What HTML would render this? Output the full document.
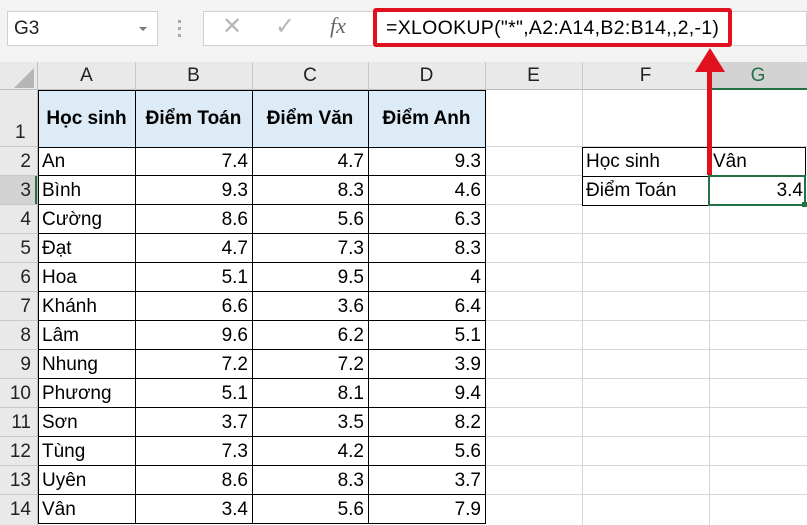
<!DOCTYPE html>
<html><head><meta charset="utf-8"><style>
body{margin:0;width:807px;height:525px;overflow:hidden;background:#fff;font-family:"Liberation Sans",sans-serif;position:relative}
.a{position:absolute;box-sizing:border-box}
.t{font-size:19px;color:#000;line-height:29px;white-space:nowrap}
.ch{font-size:19px;color:#222;text-align:center;line-height:28px}
.rh{font-size:19px;color:#222;text-align:right;padding-right:6px;background:#e9e9e9}
.gv{background:#d6d6d6;width:1px}
.gh{background:#d6d6d6;height:1px}
</style></head><body>
<div class="a" style="left:0;top:0;width:807px;height:62px;background:#f3f3f3"></div>
<div class="a" style="left:7px;top:11px;width:151px;height:35px;background:#fff;border:1px solid #d0d0d0"></div>
<div class="a t" style="left:14px;top:14px;font-size:19px;color:#222">G3</div>
<div class="a" style="left:139px;top:27px;width:0;height:0;border-left:4px solid transparent;border-right:4px solid transparent;border-top:4px solid #777"></div>
<div class="a" style="left:178px;top:20px;width:3px;height:3px;background:#aaa"></div>
<div class="a" style="left:178px;top:27px;width:3px;height:3px;background:#aaa"></div>
<div class="a" style="left:178px;top:34px;width:3px;height:3px;background:#aaa"></div>
<div class="a" style="left:203px;top:11px;width:604px;height:35px;background:#fff;border:1px solid #d0d0d0"></div>
<div class="a" style="left:222px;top:12px;font-size:24px;color:#b8b8b8">✕</div>
<div class="a" style="left:275px;top:12px;font-size:24px;color:#b8b8b8">✓</div>
<div class="a" style="left:330px;top:13px;font-size:22px;font-style:italic;font-family:'Liberation Serif',serif;color:#666">fx</div>
<div class="a" style="left:373px;top:8px;width:359px;height:39px;border:4px solid #e0101e;border-radius:3px"></div>
<div class="a t" style="left:386px;top:14px;font-size:19.5px;letter-spacing:0.3px">=XLOOKUP("*",A2:A14,B2:B14,,2,-1)</div>
<div class="a" style="left:0;top:62px;width:807px;height:28px;background:#e9e9e9;border-bottom:1px solid #bdbdbd"></div>
<div class="a" style="left:709px;top:62px;width:98px;height:28px;background:#d3d3d3;border-bottom:2px solid #217346"></div>
<div class="a" style="left:14px;top:68px;width:0;height:0;border-left:20px solid transparent;border-bottom:20px solid #b5b5b5"></div>
<div class="a ch" style="left:38px;top:62px;width:97px">A</div>
<div class="a ch" style="left:135px;top:62px;width:117px">B</div>
<div class="a ch" style="left:252px;top:62px;width:116px">C</div>
<div class="a ch" style="left:368px;top:62px;width:117px">D</div>
<div class="a ch" style="left:485px;top:62px;width:97px">E</div>
<div class="a ch" style="left:582px;top:62px;width:127px">F</div>
<div class="a ch" style="left:709px;top:62px;width:98px;color:#217346">G</div>
<div class="a gv" style="left:37px;top:62px;height:463px;background:#bdbdbd"></div>
<div class="a gv" style="left:135px;top:62px;height:28px;background:#c8c8c8"></div>
<div class="a gv" style="left:252px;top:62px;height:28px;background:#c8c8c8"></div>
<div class="a gv" style="left:368px;top:62px;height:28px;background:#c8c8c8"></div>
<div class="a gv" style="left:485px;top:62px;height:28px;background:#c8c8c8"></div>
<div class="a gv" style="left:582px;top:62px;height:28px;background:#c8c8c8"></div>
<div class="a gv" style="left:709px;top:62px;height:28px;background:#c8c8c8"></div>
<div class="a" style="left:0;top:90px;width:37px;height:435px;background:#e9e9e9"></div>
<div class="a" style="left:0;top:176px;width:37px;height:29px;background:#d3d3d3;border-right:2px solid #217346"></div>
<div id="rows"></div>
<div class="a gv" style="left:582px;top:90px;height:435px"></div>
<div class="a gv" style="left:709px;top:90px;height:435px"></div>
<div class="a" style="left:38px;top:90px;width:448px;height:58px;background:#ddebf7;border:1px solid #000"></div>
<div class="a" style="left:135px;top:90px;width:1px;height:434px;background:#000"></div>
<div class="a" style="left:252px;top:90px;width:1px;height:434px;background:#000"></div>
<div class="a" style="left:368px;top:90px;width:1px;height:434px;background:#000"></div>
<div class="a" style="left:485px;top:90px;width:1px;height:434px;background:#000"></div>
<div class="a" style="left:38px;top:90px;width:1px;height:434px;background:#000"></div>
<div class="a t" style="left:38px;top:104px;width:97px;text-align:center;font-weight:bold;font-size:19px">Học sinh</div>
<div class="a t" style="left:135px;top:104px;width:117px;text-align:center;font-weight:bold;font-size:19px">Điểm Toán</div>
<div class="a t" style="left:252px;top:104px;width:116px;text-align:center;font-weight:bold;font-size:19px">Điểm Văn</div>
<div class="a t" style="left:368px;top:104px;width:117px;text-align:center;font-weight:bold;font-size:19px">Điểm Anh</div>
<div class="a" style="left:15px;top:118px;font-size:19px;line-height:29px;color:#222">1</div>
<script>
var d=[["An",7.4,4.7,9.3],["Bình",9.3,8.3,4.6],["Cường",8.6,5.6,6.3],["Đạt",4.7,7.3,8.3],["Hoa",5.1,9.5,4],["Khánh",6.6,3.6,6.4],["Lâm",9.6,6.2,5.1],["Nhung",7.2,7.2,3.9],["Phương",5.1,8.1,9.4],["Sơn",3.7,3.5,8.2],["Tùng",7.3,4.2,5.6],["Uyên",8.6,8.3,3.7],["Vân",3.4,5.6,7.9]];
var h="";
for(var i=0;i<13;i++){var y=147+i*29;
h+='<div class="a gh" style="left:0;top:'+(y-1)+'px;width:37px;background:#c8c8c8"></div>';
h+='<div class="a gh" style="left:486px;top:'+(y-1)+'px;width:321px"></div>';
h+='<div class="a" style="left:38px;top:'+(y-1)+'px;width:448px;height:1px;background:#000"></div>';
h+='<div class="a rh" style="left:0;top:'+y+'px;width:37px;height:28px;line-height:29px;background:transparent">'+(i+2)+'</div>';
h+='<div class="a t" style="left:42px;top:'+y+'px">'+d[i][0]+'</div>';
var xs=[[135,252],[252,368],[368,485]];
for(var j=0;j<3;j++)h+='<div class="a t" style="left:'+xs[j][0]+'px;top:'+y+'px;width:'+(xs[j][1]-xs[j][0]-4)+'px;text-align:right">'+d[i][j+1]+'</div>';
}
h+='<div class="a" style="left:38px;top:523px;width:448px;height:1px;background:#000"></div>';
document.getElementById("rows").innerHTML=h;
</script>
<div class="a" style="left:582px;top:147px;width:224px;height:59px;border:1px solid #000;background:#fff"></div>
<div class="a" style="left:582px;top:176px;width:224px;height:1px;background:#000"></div>
<div class="a" style="left:709px;top:147px;width:1px;height:59px;background:#000"></div>
<div class="a t" style="left:586px;top:147px">Học sinh</div>
<div class="a t" style="left:713px;top:147px">Vân</div>
<div class="a t" style="left:586px;top:176px">Điểm Toán</div>
<div class="a" style="left:708px;top:175px;width:98px;height:31px;border:2px solid #217346"></div>
<div class="a" style="left:802px;top:202px;width:5px;height:5px;background:#217346"></div>
<div class="a t" style="left:709px;top:176px;width:94px;text-align:right">3.4</div>
<div class="a" style="left:707px;top:68px;width:5px;height:107px;background:#e0101e"></div>
<div class="a" style="left:695px;top:48px;width:0;height:0;border-left:15px solid transparent;border-right:15px solid transparent;border-bottom:24px solid #e0101e"></div>
</body></html>
